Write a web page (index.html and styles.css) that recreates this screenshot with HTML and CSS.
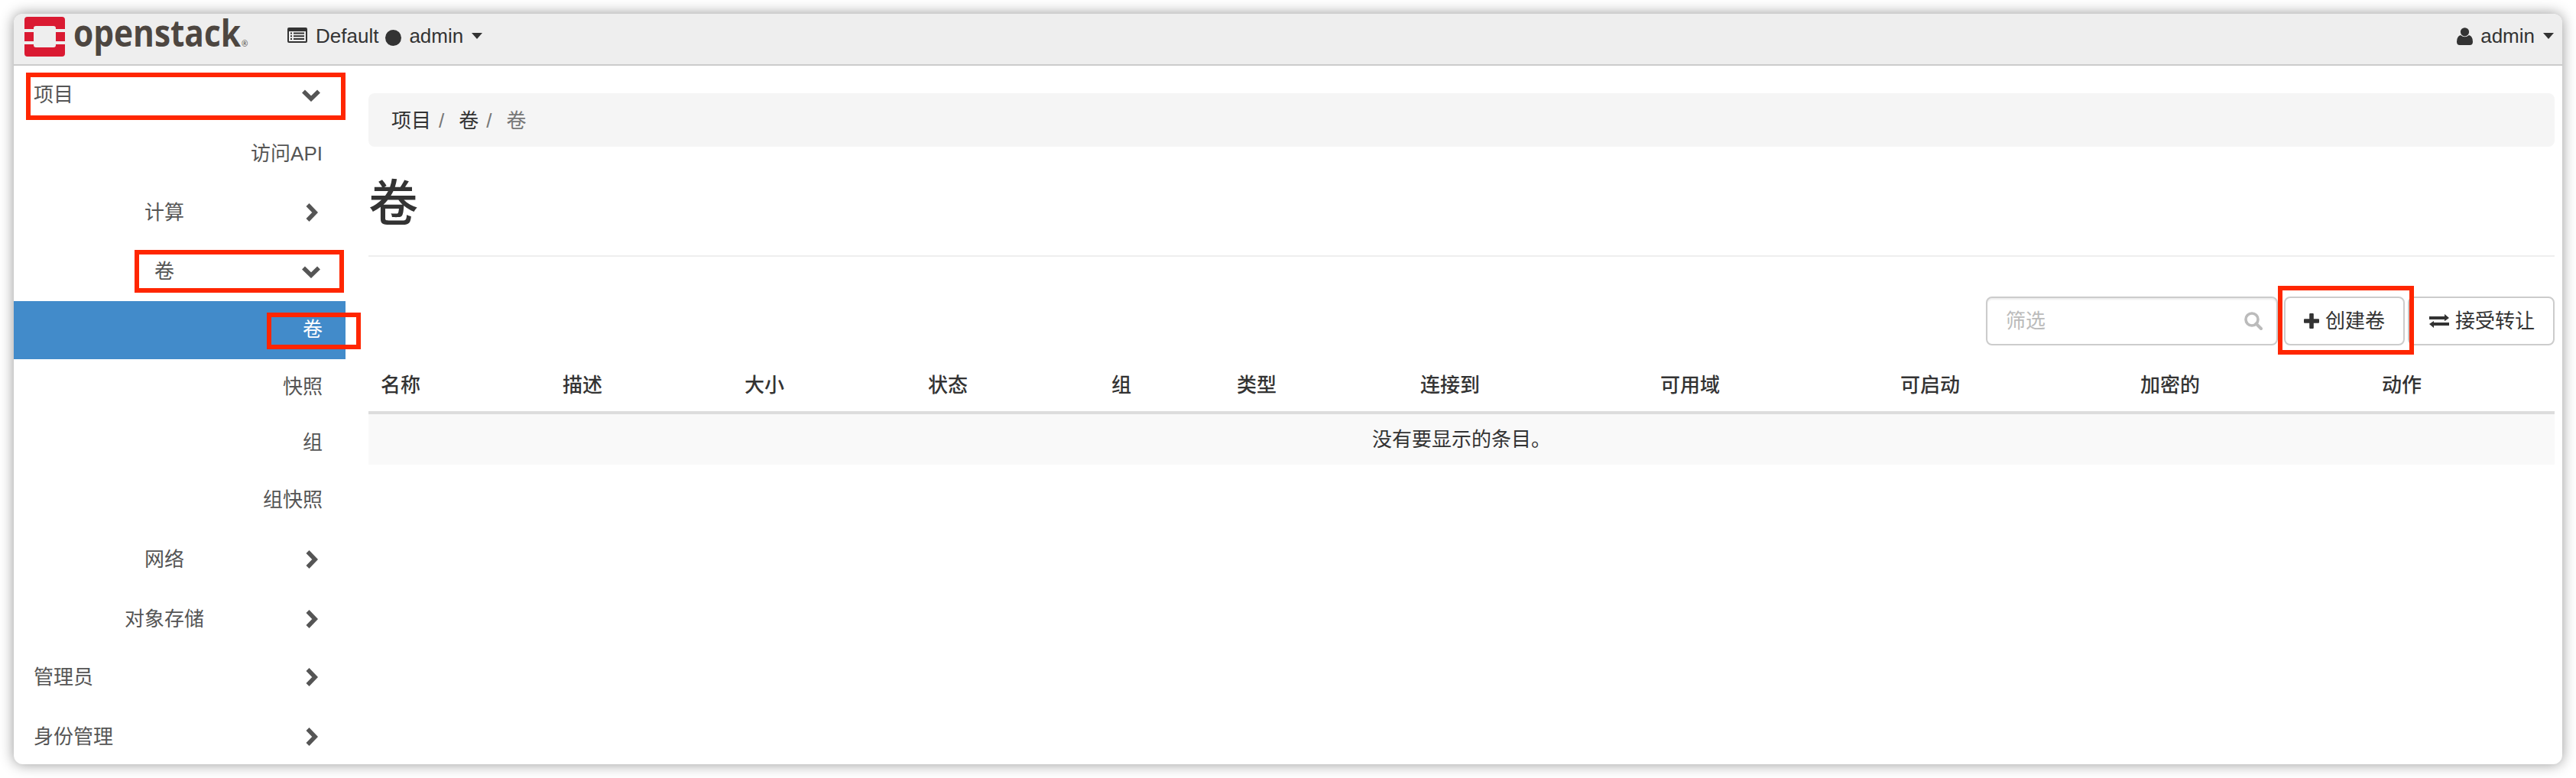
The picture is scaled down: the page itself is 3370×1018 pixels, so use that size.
FILE: index.html
```html
<!DOCTYPE html>
<html lang="zh-CN">
<head>
<meta charset="utf-8">
<title>卷 - OpenStack Dashboard</title>
<link rel="stylesheet" href="styles.css">
</head>
<body>
<svg class="defs" aria-hidden="true">
  <symbol id="chev-down" viewBox="0 0 24 16"><path d="M2 2.5 L12 12.2 L22 2.5" fill="none" stroke="currentColor" stroke-width="5.6"/></symbol>
  <symbol id="chev-right" viewBox="0 0 16 24"><path d="M2.5 2 L12.2 12 L2.5 22" fill="none" stroke="currentColor" stroke-width="5.6"/></symbol>
</svg>
<div class="window">
  <header class="topbar">
    <a class="brand">
      <svg class="brand-mark" viewBox="0 0 53 52">
        <path fill="#da1a32" d="M4 0H49Q53 0 53 4V16H41V15Q41 12 38 12H15Q12 12 12 15V16H0V4Q0 0 4 0ZM0 20H12V32H0ZM41 20H53V32H41ZM0 36H12V37Q12 40 15 40H38Q41 40 41 37V36H53V48Q53 52 49 52H4Q0 52 0 48Z"/>
      </svg>
      <svg class="brand-name" viewBox="0 0 232 52">
        <text class="wordmark" x="0" y="39" textLength="219" lengthAdjust="spacingAndGlyphs">openstack</text>
        <text class="reg" x="220" y="39">®</text>
      </svg>
    </a>
    <div class="context">
      <svg class="list-icon" viewBox="0 0 26 20"><path fill="#333" fill-rule="evenodd" d="M2 0H24Q26 0 26 2V18Q26 20 24 20H2Q0 20 0 18V2Q0 0 2 0ZM2 5V18H24V5ZM4 6.5H6V8.5H4ZM8 6.5H22V8.5H8ZM4 10.3H6V12.3H4ZM8 10.3H22V12.3H8ZM4 14.1H6V16.1H4ZM8 14.1H22V16.1H8Z"/></svg>
      <span class="domain">Default</span><span class="dot"></span><span>admin</span><span class="caret"></span>
    </div>
    <div class="user">
      <svg class="user-icon" viewBox="0 0 21 23"><circle cx="10.5" cy="5.8" r="5.6"/><path d="M5 10Q10.5 14.5 16 10Q21 11.5 21 18.5Q21 23 17 23H4Q0 23 0 18.5Q0 11.5 5 10Z"/></svg>
      <span>admin</span><span class="caret"></span>
    </div>
  </header>
  <div class="layout">
    <nav class="sidebar">
      <div class="item top r1"><span class="label">项目</span><svg class="down"><use href="#chev-down"/></svg></div>
      <div class="item leaf r2">访问API</div>
      <div class="item group r3"><span class="label">计算</span><svg class="right"><use href="#chev-right"/></svg></div>
      <div class="item group r4"><span class="label">卷</span><svg class="down"><use href="#chev-down"/></svg></div>
      <div class="item leaf active">卷</div>
      <div class="item leaf r6">快照</div>
      <div class="item leaf r7">组</div>
      <div class="item leaf r8">组快照</div>
      <div class="item group r9"><span class="label">网络</span><svg class="right"><use href="#chev-right"/></svg></div>
      <div class="item group r10"><span class="label">对象存储</span><svg class="right"><use href="#chev-right"/></svg></div>
      <div class="item top r11"><span class="label">管理员</span><svg class="right"><use href="#chev-right"/></svg></div>
      <div class="item top r12"><span class="label">身份管理</span><svg class="right"><use href="#chev-right"/></svg></div>
    </nav>
    <main class="content">
      <div class="breadcrumb"><span>项目</span><i>/</i><span>卷</span><i>/</i><span class="current">卷</span></div>
      <h1>卷</h1>
      <div class="actions">
        <div class="filter"><span>筛选</span><svg viewBox="0 0 24 24"><circle cx="10" cy="10" r="8" fill="none" stroke="#bbb" stroke-width="3.6"/><path d="M15.5 15.5L22 22" stroke="#bbb" stroke-width="4" stroke-linecap="round"/></svg></div>
        <button class="btn create"><svg viewBox="0 0 20 20"><path fill="#333" d="M7.2 1Q7.2 0 8.2 0H11.8Q12.8 0 12.8 1V7.2H19Q20 7.2 20 8.2V11.8Q20 12.8 19 12.8H12.8V19Q12.8 20 11.8 20H8.2Q7.2 20 7.2 19V12.8H1Q0 12.8 0 11.8V8.2Q0 7.2 1 7.2H7.2Z"/></svg>创建卷</button>
        <button class="btn accept"><svg viewBox="0 0 26 18"><path fill="#333" d="M0 3H20V0L26 5L20 9.2V7H0ZM26 15H6V18L0 13L6 9V11H26Z"/></svg>接受转让</button>
      </div>
      <table class="volumes">
        <colgroup><col class="c1"><col class="c2"><col class="c3"><col class="c4"><col class="c5"><col class="c6"><col class="c7"><col class="c8"><col class="c9"><col class="c10"><col class="c11"></colgroup>
        <thead><tr><th>名称</th><th>描述</th><th>大小</th><th>状态</th><th>组</th><th>类型</th><th>连接到</th><th>可用域</th><th>可启动</th><th>加密的</th><th>动作</th></tr></thead>
        <tbody><tr><td colspan="11">没有要显示的条目。</td></tr></tbody>
      </table>
    </main>
  </div>
</div>
<div class="mark m1"></div>
<div class="mark m2"></div>
<div class="mark m3"></div>
<div class="mark m4"></div>
</body>
</html>
```
FILE: styles.css
```css
* { box-sizing: border-box; }
body {
  margin: 0;
  padding: 18px;
  width: 3370px;
  height: 1018px;
  overflow: hidden;
  position: relative;
  background: #fff;
  color: #333;
  font: 26px/36px "Liberation Sans", "Noto Sans CJK SC", sans-serif;
}
.defs { position: absolute; width: 0; height: 0; }
svg { display: block; flex: none; }
.window {
  height: 982px;
  border-radius: 12px;
  background: #fff;
  box-shadow: 0 0 18px rgba(0, 0, 0, .42);
  overflow: hidden;
}

/* Top bar */
.topbar {
  display: flex;
  align-items: flex-start;
  height: 68px;
  background: #eee;
  border-bottom: 2px solid #ccc;
}
.brand { display: flex; gap: 11px; padding: 4px 0 0 14px; }
.brand-mark { width: 53px; height: 52px; }
.brand-name { width: 232px; height: 52px; overflow: visible; }
.wordmark { font: 700 48px "Open Sans", sans-serif; fill: #4d4640; }
.reg { font: 10px "Open Sans", sans-serif; fill: #4d4640; }
.context { display: flex; align-items: center; margin-left: 48px; padding-top: 12px; height: 46px; }
.list-icon { width: 26px; height: 20px; margin: 0 11px 2px 0; }
.dot { width: 21px; height: 21px; margin: 4px 10px 0 9px; border-radius: 50%; background: #333; }
.caret { margin-left: 11px; border: 7.5px solid transparent; border-top: 8px solid #333; border-bottom: 0; }
.user { display: flex; align-items: center; margin-left: auto; padding: 12px 11px 0 0; height: 46px; }
.user-icon { width: 21px; height: 23px; margin-right: 10px; fill: #333; }

/* Sidebar */
.layout { display: flex; }
.sidebar { width: 434px; flex: none; color: #555; }
.item { display: flex; align-items: center; height: 76px; }
.top { padding-left: 26px; }
.top .label { width: 318px; }
.group { padding-left: 50px; }
.group .label { width: 294px; text-align: center; }
.down { width: 24px; height: 16px; margin-left: 33px; margin-top: 2px; }
.right { width: 16px; height: 24px; margin-left: 38px; margin-top: 1px; }
.leaf { justify-content: flex-end; padding-right: 30px; }
.active { background: #428bca; color: #fff; padding-bottom: 2px; }
.r2 { height: 78px; }
.r3 { height: 75px; }
.r4 { height: 79px; }
.r6 { height: 71px; }
.r7, .r8 { height: 75px; }
.r9 { height: 80px; padding-top: 1px; }
.r10, .r11 { padding-top: 1px; }
.r12 { height: 77px; padding-top: 4px; }

/* Main panel */
.content { width: 2860px; margin-left: 30px; padding-top: 36px; }
.breadcrumb {
  display: flex;
  align-items: center;
  height: 70px;
  padding: 1px 0 0 30px;
  border-radius: 8px;
  background: #f5f5f5;
}
.breadcrumb i { font-style: normal; color: #777; margin: 0 19px 0 10px; }
.breadcrumb .current { color: #777; }
h1 {
  height: 144px;
  margin: 0;
  padding-top: 31px;
  border-bottom: 2px solid #eee;
  font-size: 65px;
  line-height: 88px;
  font-weight: 500;
}
.actions { display: flex; justify-content: flex-end; height: 116px; padding-top: 52px; }
.filter, .btn {
  display: flex;
  align-items: center;
  height: 64px;
  border: 2px solid #ccc;
  border-radius: 8px;
  background: #fff;
}
.filter {
  width: 382px;
  margin-right: 8px;
  padding: 0 18px 0 24px;
  justify-content: space-between;
  color: #bbb;
  box-shadow: inset 0 2px 2px rgba(0, 0, 0, .075);
}
.filter svg { width: 24px; height: 24px; }
.btn { padding: 0 24px; font: inherit; color: #333; }
.create { width: 158px; margin-right: 4px; }
.create svg { width: 20px; height: 20px; margin-right: 8px; }
.accept { width: 192px; padding: 0 22px 0 26px; white-space: nowrap; }
.accept svg { width: 26px; height: 18px; margin-right: 8px; }
.volumes { width: 2860px; table-layout: fixed; border-collapse: collapse; }
.volumes th {
  height: 88px;
  padding: 18px 0 0 16px;
  border-bottom: 4px solid #ddd;
  text-align: left;
  font-weight: 500;
}
.volumes td { height: 68px; padding: 0; background: #f9f9f9; text-align: center; }
.c1, .c2 { width: 238px; }
.c3 { width: 240px; }
.c4 { width: 240px; }
.c5 { width: 164px; }
.c6 { width: 240px; }
.c7, .c8, .c9 { width: 314px; }
.c10 { width: 316px; }

/* Highlight boxes drawn over the page */
.mark { position: absolute; border: 6px solid #ff2600; }
.m1 { left: 34px; top: 95px; width: 418px; height: 62px; }
.m2 { left: 176px; top: 327px; width: 274px; height: 56px; }
.m3 { left: 349px; top: 409px; width: 123px; height: 48px; }
.m4 { left: 2980px; top: 374px; width: 178px; height: 90px; }
```
